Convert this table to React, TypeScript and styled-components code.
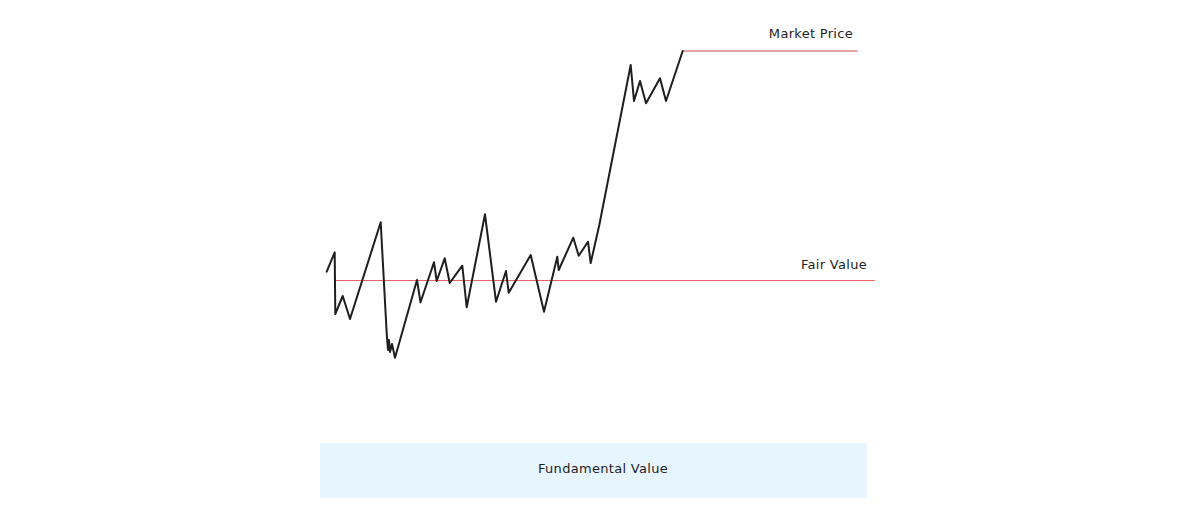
import styled, { createGlobalStyle } from "styled-components";
import { ReactElement } from "react";

// pontos do preço, em coordenadas da página
const pricePoints: [number, number][] = [
    [326.7, 271.7], [334.7, 252.3], [335.3, 314], [342.7, 296], [350, 319],
    [380.7, 222.3], [386.7, 333.3], [388, 350], [389, 340], [390, 352],
    [392, 344], [395, 357.7], [417, 280], [420.5, 302.3], [434, 262.3],
    [436.7, 281], [444.7, 258.3], [449.7, 283], [462.3, 265.7], [466.7, 307.3],
    [485, 214.3], [496, 301.7], [506, 271], [508.7, 292.7], [530.7, 255],
    [544, 311.7], [557.3, 256.7], [558.7, 270], [573.3, 237.7], [578.7, 255.7],
    [588, 241.7], [590.7, 263], [599.3, 225], [630.7, 65], [634, 101],
    [640, 81], [646, 103.3], [660, 78.3], [666, 101], [682.7, 51],
];

export default function App(): JSX.Element {
    return (
        <>
            <GlobalStyle />
            <Page>
                <Figure>
                    <PriceChart />
                    <Label top={26} right={27}>Market Price</Label>
                    <Label top={257} right={13}>Fair Value</Label>
                </Figure>
                <ValueBox>Fundamental Value</ValueBox>
            </Page>
        </>
    );
}

/*        ---------------------        COMPONENTES        ---------------------        */

const PriceChart = (): ReactElement => {
    const path = pricePoints.map(([x, y], i) => `${i ? "L" : "M"}${x} ${y}`).join(" ");
    return (
        <ChartSvg viewBox="320 0 560 430" width={560} height={430}>
            <line x1={335} y1={280.5} x2={875} y2={280.5} stroke="#e03131" strokeWidth={1.1} strokeOpacity={0.75} />
            <line x1={682.7} y1={51} x2={857.7} y2={51} stroke="#c92a2a" strokeWidth={1.1} strokeOpacity={0.85} />
            <path d={path} fill="none" stroke="#1e1e1e" strokeWidth={2} strokeLinejoin="round" strokeLinecap="round" />
        </ChartSvg>
    );
};

/*        ---------------------        ESTILOS        ---------------------        */

const GlobalStyle = createGlobalStyle`
    body {
        margin: 0;
        background: #ffffff;
        font-family: "DejaVu Sans", "Liberation Sans", sans-serif;
        color: #1e1e1e;
    }
`;

const Page = styled.div`
    display: flex;
    flex-direction: column;
    padding-left: 320px;
    width: 1184px;
    height: 513px;
    box-sizing: border-box;
`;

const Figure = styled.div`
    position: relative;
    width: 560px;
    height: 430px;
`;

const ChartSvg = styled.svg`
    display: block;
`;

const Label = styled.span<{ top: number; right: number }>`
    position: absolute;
    top: ${p => p.top}px;
    right: ${p => p.right}px;
    font-size: 13px;
    letter-spacing: 0.3px;
    color: #1e1e1e;
    white-space: nowrap;
`;

const ValueBox = styled.div`
    margin-top: 13px;
    width: 547px;
    height: 55px;
    background: #e7f5ff;
    display: flex;
    align-items: center;
    justify-content: center;
    padding: 0 0 4px 19px;
    box-sizing: border-box;
    font-size: 13px;
    letter-spacing: 0.3px;
    color: #1e1e1e;
`;
